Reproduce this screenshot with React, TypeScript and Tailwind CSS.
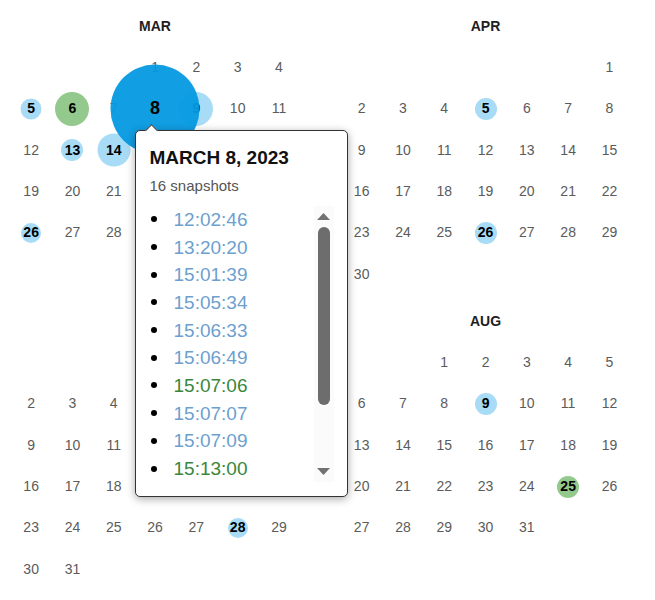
import React from 'react';

type Mark = { size: number; tone: 'blue' | 'green' | 'active' };

interface MonthProps {
  name: string;
  startDay: number;
  days: number;
  marks: Record<number, Mark>;
}

const months: MonthProps[] = [
  {
    name: 'MAR',
    startDay: 3,
    days: 31,
    marks: {
      5: { size: 21, tone: 'blue' },
      6: { size: 34, tone: 'green' },
      8: { size: 89, tone: 'active' },
      9: { size: 34, tone: 'blue' },
      13: { size: 22, tone: 'blue' },
      14: { size: 33, tone: 'blue' },
      26: { size: 20, tone: 'blue' },
    },
  },
  {
    name: 'APR',
    startDay: 6,
    days: 30,
    marks: {
      5: { size: 22, tone: 'blue' },
      26: { size: 22, tone: 'blue' },
    },
  },
  {
    name: 'JUL',
    startDay: 6,
    days: 31,
    marks: {
      28: { size: 20, tone: 'blue' },
    },
  },
  {
    name: 'AUG',
    startDay: 2,
    days: 31,
    marks: {
      9: { size: 22, tone: 'blue' },
      25: { size: 22, tone: 'green' },
    },
  },
];

const snapshots: { time: string; ok: boolean }[] = [
  { time: '12:02:46', ok: false },
  { time: '13:20:20', ok: false },
  { time: '15:01:39', ok: false },
  { time: '15:05:34', ok: false },
  { time: '15:06:33', ok: false },
  { time: '15:06:49', ok: false },
  { time: '15:07:06', ok: true },
  { time: '15:07:07', ok: false },
  { time: '15:07:09', ok: false },
  { time: '15:13:00', ok: true },
];

const toneClass = {
  blue: 'bg-[#a8dcf6]',
  green: 'bg-[#94c98d]',
  active: 'bg-[#0499e2]/95 z-10',
};

const DayCell: React.FC<{ day: number; mark?: Mark }> = ({ day, mark }) => {
  return (
    <div className="relative flex h-[41.3px] items-center justify-center">
      {mark && (
        <span
          className={`absolute left-1/2 top-1/2 -translate-x-1/2 -translate-y-1/2 rounded-full ${toneClass[mark.tone]}`}
          style={{ width: mark.size, height: mark.size }}
        />
      )}
      {mark ? (
        <span
          className={`relative font-bold text-black ${
            mark.tone === 'active' ? 'z-20 text-[18px]' : 'text-[14px]'
          }`}
        >
          {day}
        </span>
      ) : (
        <span className="text-[14px] text-[#5b5b5b]">{day}</span>
      )}
    </div>
  );
};

const Month: React.FC<MonthProps> = ({ name, startDay, days, marks }) => {
  const cells: (number | null)[] = [];
  for (let i = 0; i < startDay; i++) cells.push(null);
  for (let d = 1; d <= days; d++) cells.push(d);

  return (
    <div className="h-[295px]">
      <div className="flex h-[42px] items-center justify-center text-[14px] font-bold text-[#1e1e1e]">
        {name}
      </div>
      <div className="grid grid-cols-[repeat(7,41.3px)]">
        {cells.map((d, i) =>
          d === null ? (
            <div key={i} className="h-[41.3px]" />
          ) : (
            <DayCell key={i} day={d} mark={marks[d]} />
          )
        )}
      </div>
    </div>
  );
};

const Triangle: React.FC<{ up?: boolean }> = ({ up }) => (
  <svg width="13" height="7" viewBox="0 0 13 7" className="block">
    {up ? (
      <polygon points="6.5,0 13,7 0,7" fill="#727272" />
    ) : (
      <polygon points="0,0 13,0 6.5,7" fill="#727272" />
    )}
  </svg>
);

const SnapshotPopup: React.FC = () => {
  return (
    <div className="absolute left-[135px] top-[130px] z-30 h-[367px] w-[213px] rounded-[5px] border-[1.5px] border-[#333] bg-white shadow-[0_2px_8px_rgba(0,0,0,0.35)]">
      <span className="absolute left-[11px] top-[-5.5px] h-[9px] w-[9px] rotate-45 border-l-[1.5px] border-t-[1.5px] border-[#333] bg-white" />
      <div className="pl-[13.5px] pt-[15.5px]">
        <div className="text-[19px] font-bold leading-[22px] text-[#111]">MARCH 8, 2023</div>
        <div className="mt-[8px] text-[15px] leading-[18px] text-[#555]">16 snapshots</div>
      </div>
      <div className="mt-[11px] flex h-[276px] pr-[13.5px]">
        <ul className="flex-1 overflow-hidden">
          {snapshots.map((s) => (
            <li key={s.time} className="flex h-[27.7px] items-center">
              <span className="ml-[14.5px] h-[6px] w-[6px] rounded-full bg-black" />
              <span
                className={`ml-[17px] text-[19px] leading-none ${
                  s.ok ? 'text-[#3a863a]' : 'text-[#6d9fcf]'
                }`}
              >
                {s.time}
              </span>
            </li>
          ))}
        </ul>
        <div className="flex w-[20px] flex-col items-center bg-[#fbfbfb] pt-[7px]">
          <Triangle up />
          <div className="mt-[7px] h-[178px] w-[12px] rounded-full bg-[#6d6d6d]" />
          <div className="mt-[63px]">
            <Triangle />
          </div>
        </div>
      </div>
    </div>
  );
};

export default function App() {
  return (
    <div
      className="relative h-[600px] w-[655px] overflow-hidden bg-white"
      style={{ fontFamily: '"Liberation Sans", Arial, sans-serif' }}
    >
      <div className="grid grid-cols-[289px_289px] gap-x-[41.5px] pl-[10.5px] pt-[5px]">
        {months.map((m) => (
          <Month key={m.name} {...m} />
        ))}
      </div>
      <SnapshotPopup />
    </div>
  );
}
